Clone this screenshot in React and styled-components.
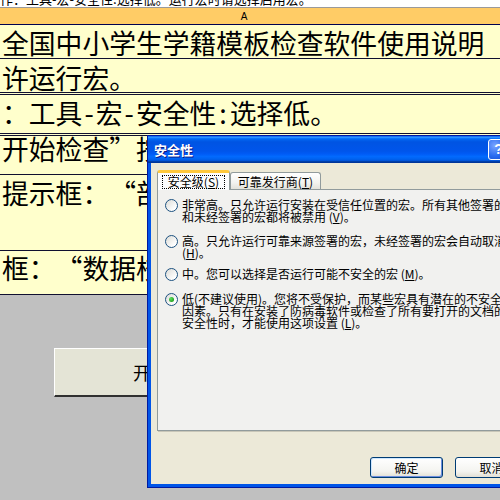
import React from "react";
import styled, { createGlobalStyle } from "styled-components";

const Global = createGlobalStyle`
  html, body { margin: 0; padding: 0; background: #c0c0c0; overflow: hidden; }
  body { font-family: "Noto Sans CJK SC", sans-serif; }
`;

const Page = styled.div`
  position: relative;
  width: 500px;
  height: 500px;
  overflow: hidden;
  background: #c0c0c0;
`;

const Sheet = styled.div`
  display: flex;
  flex-direction: column;
  width: 500px;
  height: 500px;
`;

const TopStrip = styled.div`
  height: 8px;
  box-sizing: border-box;
  background: #fff;
  overflow: hidden;
  border-bottom: 1px solid #9a9a9a;
`;

const TopText = styled.div`
  font-family: "Noto Sans CJK SC", sans-serif;
  font-size: 13px;
  line-height: 13px;
  margin-top: -8px;
  white-space: nowrap;
  color: #000;
`;

const ColHeader = styled.div`
  height: 17px;
  box-sizing: border-box;
  background: #ffcc66;
  border-bottom: 1px solid #000050;
  display: flex;
`;

const ColCell = styled.div`
  width: 488px;
  text-align: center;
  font-family: "Liberation Sans", sans-serif;
  font-size: 10px;
  line-height: 17px;
  color: #000;
`;

const Row = styled.div`
  box-sizing: border-box;
  height: ${(p) => p.$h}px;
  padding: ${(p) => p.$pt}px 0 0 2px;
  background: #ffffcc;
  border-bottom: ${(p) => (p.$double ? "3px double" : "1px solid")} #101030;
  font-family: "Noto Sans CJK SC", sans-serif;
  font-size: 26.8px;
  line-height: 26.8px;
  color: #000;
  white-space: nowrap;
  overflow: hidden;
`;

/* half-width ASCII punctuation cell, as in a fixed-pitch CJK font */
const Half = styled.span`
  display: inline-block;
  width: 0.5em;
  text-align: center;
`;

/* full-width quotation mark cell */
const Wide = styled.span`
  display: inline-block;
  width: 1em;
  text-align: ${(p) => p.$align || "center"};
`;

const GrayArea = styled.div`
  flex: 1;
  background: #c0c0c0;
  padding: 53px 0 0 54px;
`;

const SheetButton = styled.div`
  width: 230px;
  height: 49px;
  box-sizing: border-box;
  background: #e4e4d6;
  border-top: 1px solid #fff;
  border-left: 1px solid #fff;
  border-right: 1px solid #404040;
  border-bottom: 2px solid #303030;
  display: flex;
  align-items: center;
  justify-content: center;
  font-family: "Noto Sans CJK SC", sans-serif;
  font-size: 18px;
  color: #000;
`;

/* ---------- dialog ---------- */

const Dialog = styled.div`
  position: absolute;
  left: 147px;
  top: 135px;
  width: 380px;
  height: 353px;
  box-sizing: border-box;
  border: 1px solid #0019a0;
  background: #0055e8;
  padding: 0 3px 3px 3px;
  display: flex;
  flex-direction: column;
`;

const TitleBar = styled.div`
  height: 27px;
  margin: 0 -3px;
  padding: 0 6px;
  display: flex;
  align-items: center;
  background: linear-gradient(
    180deg,
    #0058ee 0%,
    #3593ff 4%,
    #288eff 6%,
    #127dff 8%,
    #036ffc 10%,
    #0262ee 14%,
    #0057e5 20%,
    #0054e3 24%,
    #0055eb 56%,
    #005bf5 66%,
    #026afe 76%,
    #0062ef 86%,
    #0052d6 92%,
    #0040ab 94%,
    #003092 100%
  );
`;

const Title = styled.div`
  flex: 1;
  color: #fff;
  font-family: "Noto Sans CJK SC", sans-serif;
  font-weight: 700;
  font-size: 13px;
  text-shadow: 1px 1px 0 #0a1883;
`;

const HelpBtn = styled.div`
  width: 21px;
  height: 21px;
  box-sizing: border-box;
  border: 1px solid #fff;
  border-radius: 3px;
  background: radial-gradient(circle at 30% 30%, #7aa4ff 0%, #2a6cf0 55%, #1447c8 100%);
  color: #fff;
  font-family: "Liberation Sans", sans-serif;
  font-weight: 700;
  font-size: 14px;
  line-height: 19px;
  text-align: center;
  margin-right: 11px;
`;

const Body = styled.div`
  flex: 1;
  background: #ece9d8;
  padding: 7px 0 0 6px;
  display: flex;
  flex-direction: column;
`;

const Tabs = styled.div`
  display: flex;
  align-items: flex-end;
  height: 19px;
`;

const Tab = styled.div`
  position: relative;
  z-index: ${(p) => (p.$active ? 2 : 1)};
  box-sizing: border-box;
  width: ${(p) => p.$w}px;
  height: ${(p) => (p.$active ? 20 : 17)}px;
  margin-bottom: ${(p) => (p.$active ? -1 : 0)}px;
  border: 1px solid #919b9c;
  border-bottom: none;
  border-top: ${(p) => (p.$active ? "3px solid #ffc83c" : "1px solid #919b9c")};
  border-radius: 3px 3px 0 0;
  background: ${(p) =>
    p.$active ? "#fcfcfe" : "linear-gradient(180deg, #fff 0%, #f3f3ef 60%, #e3e2da 100%)"};
  display: flex;
  align-items: center;
  justify-content: center;
  font-family: "Noto Sans CJK SC", sans-serif;
  font-size: 12px;
  color: #000;
  white-space: nowrap;
`;

const Focus = styled.span`
  border: 1px dotted #000;
  padding: 0 5px;
  line-height: 12px;
`;

const Panel = styled.div`
  height: 242px;
  box-sizing: border-box;
  border: 1px solid #919b9c;
  background: #f1f1ef;
  box-shadow: 1px 1px 0 #c8c6b8;
  padding: 9px 0 0 7px;
  overflow: hidden;
  display: flex;
  flex-direction: column;
`;

const Option = styled.div`
  display: flex;
  align-items: flex-start;
  gap: 4px;
  margin-top: ${(p) => p.$mt || 0}px;
`;

const Radio = styled.div`
  flex: none;
  width: 13px;
  height: 13px;
  box-sizing: border-box;
  border: 1px solid #1c5180;
  border-radius: 50%;
  background: linear-gradient(135deg, #dcdcd7 0%, #fff 80%);
  display: flex;
  align-items: center;
  justify-content: center;
  &::after {
    content: "";
    display: ${(p) => (p.$checked ? "block" : "none")};
    width: 5px;
    height: 5px;
    border-radius: 50%;
    background: radial-gradient(circle at 35% 35%, #5ee35e 0%, #21a121 70%);
  }
`;

const OptText = styled.div`
  display: flex;
  flex-direction: column;
  font-family: "Noto Sans CJK SC", sans-serif;
  font-size: 12px;
  line-height: 12px;
  color: #000;
`;

const Line = styled.span`
  white-space: nowrap;
`;

const ButtonRow = styled.div`
  display: flex;
  gap: 12px;
  margin-top: 26px;
  padding-left: 213px;
`;

const XPButton = styled.div`
  flex: none;
  width: 73px;
  height: 21px;
  box-sizing: border-box;
  border: 1px solid #003c74;
  border-radius: 3px;
  background: linear-gradient(180deg, #ffffff 0%, #f4f4f0 70%, #e2dfd4 100%);
  box-shadow: ${(p) =>
    p.$default ? "inset -1px -1px 0 #6c8ede, inset 1px 1px 0 #cee7ff" : "none"};
  display: flex;
  align-items: center;
  justify-content: center;
  font-family: "Noto Sans CJK SC", sans-serif;
  font-size: 12px;
  color: #000;
`;

const U = styled.span`
  text-decoration: underline;
`;

export default function App() {
  return (
    <>
      <Global />
      <Page>
        <Sheet>
          <TopStrip>
            <TopText>作：工具-宏-安全性:选择低。运行宏时请选择启用宏。</TopText>
          </TopStrip>
          <ColHeader>
            <ColCell>A</ColCell>
          </ColHeader>
          <Row $h={34} $pt={5}>全国中小学生学籍模板检查软件使用说明</Row>
          <Row $h={36} $pt={6} $double>许运行宏。</Row>
          <Row $h={41} $pt={5} $double>
            ：工具<Half>-</Half>宏<Half>-</Half>安全性<Half>:</Half>选择低。
          </Row>
          <Row $h={39} $pt={0}>
            开始检查<Wide $align="left">”</Wide>按钮
          </Row>
          <Row $h={76} $pt={5}>
            提示框：<Wide $align="right">“</Wide>部分数据
          </Row>
          <Row $h={44} $pt={4}>
            框：<Wide $align="right">“</Wide>数据校验
          </Row>
          <GrayArea>
            <SheetButton>开始检查</SheetButton>
          </GrayArea>
        </Sheet>

        <Dialog>
          <TitleBar>
            <Title>安全性</Title>
            <HelpBtn>?</HelpBtn>
          </TitleBar>
          <Body>
            <Tabs>
              <Tab $active $w={73}>
                <Focus>
                  安全级(<U>S</U>)
                </Focus>
              </Tab>
              <Tab $w={91}>
                可靠发行商(<U>T</U>)
              </Tab>
            </Tabs>
            <Panel>
              <Option>
                <Radio />
                <OptText>
                  <Line>非常高。只允许运行安装在受信任位置的宏。所有其他签署的</Line>
                  <Line>
                    和未经签署的宏都将被禁用 (<U>V</U>)。
                  </Line>
                </OptText>
              </Option>
              <Option $mt={12}>
                <Radio />
                <OptText>
                  <Line>高。只允许运行可靠来源签署的宏，未经签署的宏会自动取消。</Line>
                  <Line>
                    (<U>H</U>)。
                  </Line>
                </OptText>
              </Option>
              <Option $mt={9}>
                <Radio />
                <OptText>
                  <Line>
                    中。您可以选择是否运行可能不安全的宏 (<U>M</U>)。
                  </Line>
                </OptText>
              </Option>
              <Option $mt={12}>
                <Radio $checked />
                <OptText>
                  <Line>低(不建议使用)。您将不受保护，而某些宏具有潜在的不安全</Line>
                  <Line>因素。只有在安装了防病毒软件或检查了所有要打开的文档的</Line>
                  <Line>
                    安全性时，才能使用这项设置 (<U>L</U>)。
                  </Line>
                </OptText>
              </Option>
            </Panel>
            <ButtonRow>
              <XPButton $default>确定</XPButton>
              <XPButton>取消</XPButton>
            </ButtonRow>
          </Body>
        </Dialog>
      </Page>
    </>
  );
}
